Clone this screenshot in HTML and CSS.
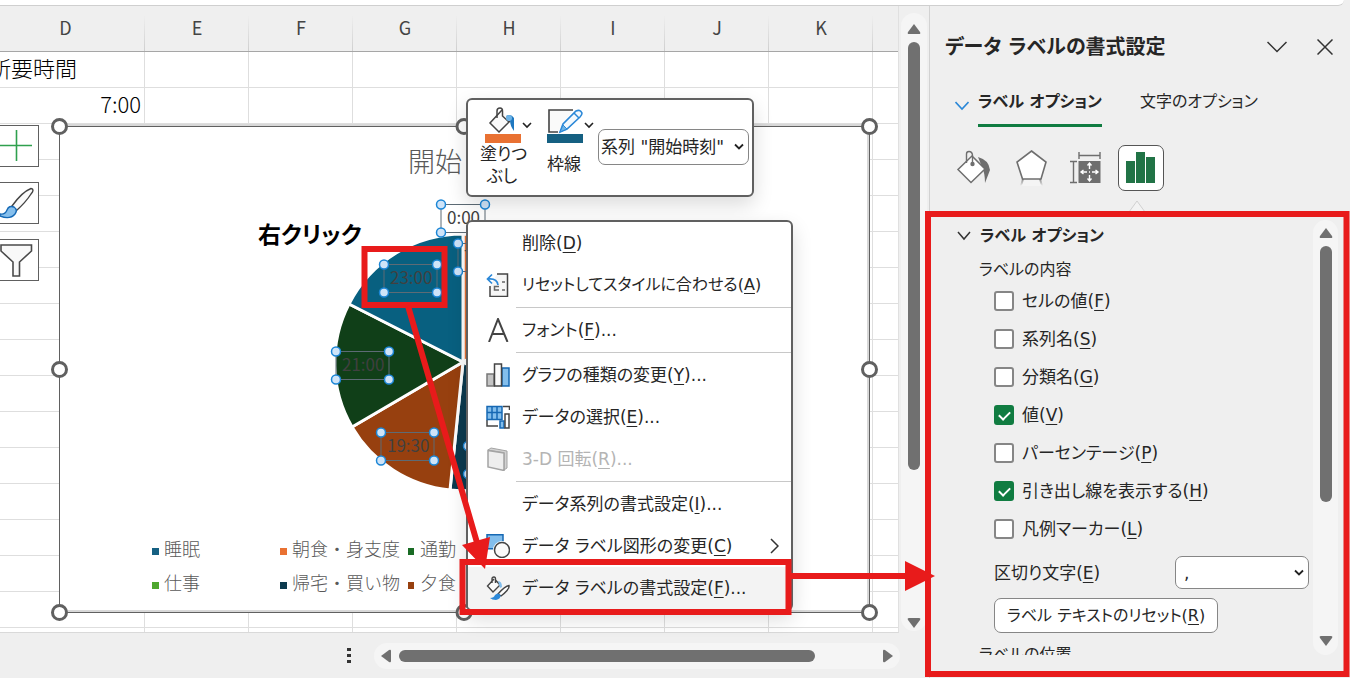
FILE: index.html
```html
<!DOCTYPE html>
<html lang="ja">
<head>
<meta charset="utf-8">
<meta name="viewport" content="width=device-width, initial-scale=1">
<title>データ ラベルの書式設定</title>
<link rel="stylesheet" href="styles.css">
</head>
<body>
<div class="app">
  <div class="formula-strip"></div>
  <div class="main">
    <section class="workbook">
      <div class="sheet-row">
        <div class="sheet">
          <table class="grid">
            <colgroup><col class="col-first"><col class="col"><col class="col"><col class="col"><col class="col"><col class="col"><col class="col"><col class="col"><col></colgroup>
            <thead>
              <tr><th>D</th><th>E</th><th>F</th><th>G</th><th>H</th><th>I</th><th>J</th><th>K</th><th></th></tr>
            </thead>
            <tbody>
              <tr><td class="cell-text">所要時間</td><td></td><td></td><td></td><td></td><td></td><td></td><td></td><td></td></tr>
              <tr><td class="cell-num">7:00</td><td></td><td></td><td></td><td></td><td></td><td></td><td></td><td></td></tr>
              <tr><td></td><td></td><td></td><td></td><td></td><td></td><td></td><td></td><td></td></tr>
              <tr><td></td><td></td><td></td><td></td><td></td><td></td><td></td><td></td><td></td></tr>
              <tr><td></td><td></td><td></td><td></td><td></td><td></td><td></td><td></td><td></td></tr>
              <tr><td></td><td></td><td></td><td></td><td></td><td></td><td></td><td></td><td></td></tr>
              <tr><td></td><td></td><td></td><td></td><td></td><td></td><td></td><td></td><td></td></tr>
              <tr><td></td><td></td><td></td><td></td><td></td><td></td><td></td><td></td><td></td></tr>
              <tr><td></td><td></td><td></td><td></td><td></td><td></td><td></td><td></td><td></td></tr>
              <tr><td></td><td></td><td></td><td></td><td></td><td></td><td></td><td></td><td></td></tr>
              <tr><td></td><td></td><td></td><td></td><td></td><td></td><td></td><td></td><td></td></tr>
              <tr><td></td><td></td><td></td><td></td><td></td><td></td><td></td><td></td><td></td></tr>
              <tr><td></td><td></td><td></td><td></td><td></td><td></td><td></td><td></td><td></td></tr>
              <tr><td></td><td></td><td></td><td></td><td></td><td></td><td></td><td></td><td></td></tr>
              <tr><td></td><td></td><td></td><td></td><td></td><td></td><td></td><td></td><td></td></tr>
              <tr><td></td><td></td><td></td><td></td><td></td><td></td><td></td><td></td><td></td></tr>
              <tr><td></td><td></td><td></td><td></td><td></td><td></td><td></td><td></td><td></td></tr>
            </tbody>
          </table>
        </div>
        <div class="vscroll">
          <svg class="arrow" viewBox="0 0 14 12"><path d="M7 1 L13 9 Q14 11 12 11 H2 Q0 11 1 9Z"/></svg>
          <div class="vthumb"></div>
          <svg class="arrow vdown" viewBox="0 0 14 12"><path d="M7 11 L13 3 Q14 1 12 1 H2 Q0 1 1 3Z"/></svg>
        </div>
      </div>
      <div class="sheet-footer">
        <svg class="dots" viewBox="0 0 4 16"><path d="M0 0h4v3H0zM0 6h4v3H0zM0 12h4v3H0z"/></svg>
        <div class="hscroll">
          <svg class="arrow-h" viewBox="0 0 12 14"><path d="M1 7 L9 1 Q11 0 11 2 V12 Q11 14 9 13Z"/></svg>
          <div class="hthumb"></div>
          <svg class="arrow-h hright" viewBox="0 0 12 14"><path d="M11 7 L3 1 Q1 0 1 2 V12 Q1 14 3 13Z"/></svg>
        </div>
      </div>
    </section>

    <aside class="pane">
      <header class="pane-head">
        <h1>データ ラベルの書式設定</h1>
        <button class="plain" aria-label="作業ウィンドウのオプション"><svg width="20" height="12" viewBox="0 0 20 12"><path class="stroke" d="M0.5 1 L10 10.500 L19.500 1"/></svg></button>
        <button class="plain" aria-label="閉じる"><svg width="16" height="16" viewBox="0 0 16 16"><path class="stroke" d="M0.500 0.500 L15.500 15.500 M15.500 0.500 L0.500 15.500"/></svg></button>
      </header>
      <nav class="tabs">
        <svg class="tab-chevron" width="14" height="10" viewBox="0 0 14 10"><path d="M0.500 1 L7 8 L13.500 1"/></svg>
        <button class="tab tab-on">ラベル オプション</button>
        <button class="tab">文字のオプション</button>
      </nav>
      <div class="icon-tabs">
        <button class="icon-tab" aria-label="塗りつぶしと線">
          <svg width="46" height="46" viewBox="0 0 46 46"><path d="M22 12 Q33 15 34 25 L29 38 Q29 28 26 22Z" fill="#6e6e6e"/><path d="M16 11 L29 24 L15 37.500 L2 24.500Z" fill="#fff" stroke="#6e6e6e" stroke-width="1.500"/><path d="M10.500 18 V9 Q10.500 6.500 13 6.500 Q16 6.500 16.500 10 V18" fill="none" stroke="#6e6e6e" stroke-width="1.400"/><circle cx="16.500" cy="19" r="2.200" fill="#6e6e6e"/></svg>
        </button>
        <button class="icon-tab" aria-label="効果">
          <svg width="46" height="46" viewBox="0 0 46 46"><defs><linearGradient id="fade" x1="0" y1="0" x2="0" y2="1"><stop offset="0" stop-color="#8b8b8b"/><stop offset="1" stop-color="#efefef"/></linearGradient></defs><path d="M12 34 H31 L33 41 L30 39 Q21 35 13 39 L10 41Z" fill="url(#fade)"/><path d="M14 34 H29 L31 41 H12Z" fill="#f4f4f4"/><path d="M21.500 6 L36 17 L31 34 H12.500 L7 17Z" fill="#fff" stroke="#6e6e6e" stroke-width="1.600"/></svg>
        </button>
        <button class="icon-tab" aria-label="サイズとプロパティ">
          <svg width="46" height="46" viewBox="0 0 46 46"><path d="M15 7 V14 M36 7 V14 M15 10.500 H36 M6 16.500 H13 M6 37.500 H13 M9.500 16.500 V37.500" fill="none" stroke="#6e6e6e" stroke-width="1.400"/><rect x="14.500" y="16" width="22" height="22" fill="#6e6e6e"/><path d="M25.500 18v6M25.500 30v6M17 27h6M28 27h6M23.500 20.500l2-2.500 2 2.500M23.500 33.500l2 2.500 2-2.500M19.500 25l-2.500 2 2.500 2M31.500 25l2.500 2-2.500 2M25 27h1" fill="none" stroke="#fff" stroke-width="1.400"/></svg>
        </button>
        <button class="icon-tab icon-tab-on" aria-label="ラベル オプション">
          <svg width="44" height="44" viewBox="0 0 44 44"><path d="M7 15h9v22H7zM17 6h9v31h-9zM27 11h9v26h-9z" fill="#217346"/></svg>
        </button>
      </div>
      <svg class="pointer" width="18" height="12" viewBox="0 0 18 12"><path d="M1 12 L9 1 L17 12" fill="#f3f3f3" stroke="#d0d0d0"/></svg>
      <div class="section">
        <div class="section-body">
          <h2><svg width="14" height="10" viewBox="0 0 14 10"><path class="stroke" d="M1 1 L7 8 L13 1"/></svg>ラベル オプション</h2>
          <p class="group">ラベルの内容</p>
          <div class="checks">
            <label><input type="checkbox"><span>セルの値(<u>F</u>)</span></label>
            <label><input type="checkbox"><span>系列名(<u>S</u>)</span></label>
            <label><input type="checkbox"><span>分類名(<u>G</u>)</span></label>
            <label><input type="checkbox" checked><span>値(<u>V</u>)</span></label>
            <label><input type="checkbox"><span>パーセンテージ(<u>P</u>)</span></label>
            <label><input type="checkbox" checked><span>引き出し線を表示する(<u>H</u>)</span></label>
            <label><input type="checkbox"><span>凡例マーカー(<u>L</u>)</span></label>
          </div>
          <div class="field">
            <label for="sep">区切り文字(<u>E</u>)</label>
            <span class="select select-sep"><select id="sep"><option>,</option></select><svg width="10" height="8" viewBox="0 0 10 8"><path d="M1 1.500 L5 5.500 L9 1.500"/></svg></span>
          </div>
          <button class="reset">ラベル テキストのリセット(<u>R</u>)</button>
          <p class="group">ラベルの位置</p>
        </div>
        <div class="pscroll">
          <svg class="arrow" viewBox="0 0 14 12"><path d="M7 1 L13 9 Q14 11 12 11 H2 Q0 11 1 9Z"/></svg>
          <div class="pthumb"></div>
          <svg class="arrow vdown" viewBox="0 0 14 12"><path d="M7 11 L13 3 Q14 1 12 1 H2 Q0 1 1 3Z"/></svg>
        </div>
      </div>
    </aside>
  </div>

  <div class="chart">
    <svg width="830" height="506" viewBox="49 116 830 506">
      <rect x="59" y="126" width="810" height="486" fill="#fff"/>
      <path d="M59 125H869M59 611H869M868 126V612" stroke="#d8d8d8" stroke-width="2" fill="none"/>
      <rect x="59.500" y="126.500" width="810" height="486" fill="none" stroke="#606060"/>
      <text class="chart-title" x="408" y="172">開始</text>
      <g stroke="#fff" stroke-width="3" stroke-linejoin="round">
        <path fill="#e97132" d="M463 362V234A128 128 0 0 1 574 298Z"/>
        <path fill="#0b3a4f" d="M463 362L574 426A128 128 0 0 1 450 490Z"/>
        <path fill="#97400f" d="M463 362L450 490A128 128 0 0 1 352 427Z"/>
        <path fill="#103f18" d="M463 362L352 427A128 128 0 0 1 349 304Z"/>
        <path fill="#086080" d="M463 362L349 304A128 128 0 0 1 463 234Z"/>
      </g>
      <g class="label-boxes">
        <path d="M441 204.500h44v28h-44zM384 264.500h53v28h-53zM336 351.500h53v28h-53zM381 432.500h53v28h-53zM458 243.500h44v28h-44z"/>
      </g>
      <g class="data-labels">
        <text x="447" y="224">0:00</text>
        <text x="464" y="263">7:00</text>
        <text x="390" y="284">23:00</text>
        <text x="342" y="371">21:00</text>
        <text x="387" y="452">19:30</text>
      </g>
      <g class="dots-sel">
        <circle cx="441" cy="204.500" r="4.500"/><circle cx="485" cy="204.500" r="4.500"/><circle cx="441" cy="232.500" r="4.500"/>
        <circle cx="458" cy="243.500" r="4.500"/><circle cx="458" cy="271.500" r="4.500"/>
        <circle cx="384" cy="264.500" r="4.500"/><circle cx="437" cy="264.500" r="4.500"/><circle cx="384" cy="292.500" r="4.500"/><circle cx="437" cy="292.500" r="4.500"/>
        <circle cx="336" cy="351.500" r="4.500"/><circle cx="389" cy="351.500" r="4.500"/><circle cx="336" cy="379.500" r="4.500"/><circle cx="389" cy="379.500" r="4.500"/>
        <circle cx="381" cy="432.500" r="4.500"/><circle cx="434" cy="432.500" r="4.500"/><circle cx="381" cy="460.500" r="4.500"/><circle cx="434" cy="460.500" r="4.500"/>
        <circle cx="468" cy="446" r="4.500"/><circle cx="468" cy="474" r="4.500"/>
      </g>
      <g class="legend">
        <path fill="#156082" d="M152 548h7v7h-7z"/><text x="164" y="556">睡眠</text>
        <path fill="#e97132" d="M280 548h7v7h-7z"/><text x="292" y="556">朝食・身支度</text>
        <path fill="#196b24" d="M408 548h6v7h-6z"/><text x="420" y="556">通勤</text>
        <path fill="#4ea72e" d="M152 582h7v7h-7z"/><text x="164" y="590">仕事</text>
        <path fill="#0c3a4e" d="M280 582h7v7h-7z"/><text x="292" y="590">帰宅・買い物</text>
        <path fill="#97400f" d="M408 582h6v7h-6z"/><text x="420" y="590">夕食</text>
      </g>
      <g fill="#fff" stroke="#606060" stroke-width="3">
        <circle cx="59.500" cy="126.500" r="7"/><circle cx="464" cy="126.500" r="7"/><circle cx="869.500" cy="126.500" r="7"/>
        <circle cx="59.500" cy="369.500" r="7"/><circle cx="869.500" cy="369.500" r="7"/>
        <circle cx="59.500" cy="612.500" r="7"/><circle cx="464" cy="612.500" r="7"/><circle cx="869.500" cy="612.500" r="7"/>
      </g>
    </svg>
  </div>

  <div class="chart-tools">
    <button aria-label="グラフ要素"><svg width="38" height="40" viewBox="0 0 38 40"><path d="M0 19.500H32M16.500 4V35" stroke="#2fa04e" stroke-width="1.600" fill="none"/></svg></button>
    <button aria-label="グラフ スタイル"><svg width="38" height="40" viewBox="0 0 38 40"><path d="M12 23 Q22 9 31 5.500 Q35 6 31 11 Q26 19 16 28Z" fill="#fafafa" stroke="#444" stroke-width="1.400"/><path d="M0 31 Q5 32 7 27 Q9 22 14 24 Q18 27 15 31 Q10 37 0 33Z" fill="#86bfec" stroke="#1468b5" stroke-width="1.400"/></svg></button>
    <button aria-label="グラフ フィルター"><svg width="38" height="40" viewBox="0 0 38 40"><path d="M1 5H31.500V11L19.500 22V36H13V22L1 11Z" fill="#f8f8f8" stroke="#4a4a4a" stroke-width="1.600"/></svg></button>
  </div>

  <div class="mini-toolbar">
    <button class="mini-btn">
      <svg width="50" height="38" viewBox="0 0 50 38"><path d="M18 5 L6 18 L15 27 L27 15" fill="#fafafa" stroke="#444" stroke-width="1.500"/><path d="M13 13V6 Q13 3 16 3 Q18.500 3 18.500 6V11 L25 17" fill="none" stroke="#444" stroke-width="1.500"/><path d="M22 11 Q27 8 30 13 V26 Q26 21 26 15Z" fill="#1f78c0"/><circle cx="25" cy="13" r="3" fill="#6db3e6"/><path fill="#e97132" d="M1 29h36v9H1z"/><path d="M39 18 L43 22 L47 18" fill="none" stroke="#222" stroke-width="1.600"/></svg>
      <span>塗りつ<br>ぶし</span>
    </button>
    <button class="mini-btn">
      <svg width="50" height="38" viewBox="0 0 50 38"><path d="M27 5H3V27H12" fill="#fafafa" stroke="#444" stroke-width="1.600"/><path d="M14 27 L17 19 L30 6 Q34 4 36 8 Q36 10 34 12 L21 24Z" fill="#f2f8fd" stroke="#2b88d8" stroke-width="1.600"/><path d="M14 27 L17 20 L21 24Z" fill="#6db3e6" stroke="#2b88d8"/><path d="M28 8 L33 13" stroke="#2b88d8" stroke-width="1.500"/><path fill="#156082" d="M1 29h36v9H1z"/><path d="M39 18 L43 22 L47 18" fill="none" stroke="#222" stroke-width="1.600"/></svg>
      <span class="one-line">枠線</span>
    </button>
    <span class="select select-series"><select aria-label="グラフ要素"><option>系列 "開始時刻"</option></select><svg width="10" height="8" viewBox="0 0 10 8"><path d="M1 1.500 L5 5.500 L9 1.500"/></svg></span>
  </div>

  <div class="menu" role="menu">
    <button role="menuitem"><span class="ico"></span>削除(<u>D</u>)</button>
    <button role="menuitem" class="kana"><svg class="ico" viewBox="0 0 24 24"><path d="M11 1H21.500V23.500H4V13" fill="#f6f6f6" stroke="#444" stroke-width="1.500"/><path d="M13 13.500H8.500V17H13M16 9h3M16 17h3" fill="none" stroke="#666" stroke-width="1.500"/><path d="M6 1.500 L1.500 6 L6 10.500 M2 6 Q11 5 12 12" fill="none" stroke="#2b88d8" stroke-width="1.700"/></svg>リセットしてスタイルに合わせる(<u>A</u>)</button>
    <hr>
    <button role="menuitem"><svg class="ico" viewBox="0 0 24 24"><path d="M3 24 L12 1 L21.500 24 M6 16H18.500" fill="none" stroke="#444" stroke-width="2"/></svg>フォント(<u>F</u>)...</button>
    <hr>
    <button role="menuitem"><svg class="ico" viewBox="0 0 24 24"><path d="M1 11h7v12H1z" fill="#c4c4c4" stroke="#777" stroke-width="1.500"/><path d="M16 5h7v18h-7z" fill="#83beec" stroke="#1668b3" stroke-width="1.500"/><path d="M8.500 1h7v22h-7z" fill="#fafafa" stroke="#444" stroke-width="1.500"/></svg>グラフの種類の変更(<u>Y</u>)...</button>
    <button role="menuitem"><svg class="ico" viewBox="0 0 24 24"><path d="M1 15V21H12M17 1.500H23.500V5" fill="none" stroke="#444" stroke-width="1.500"/><path d="M1 1.500h15v13H1z" fill="#83beec"/><path d="M1 1.500h15v13H1zM1 7.500h15M6 1v14M11 1v14" fill="none" stroke="#1668b3" stroke-width="1.500"/><path d="M14 16h4v7h-4z" fill="#83beec" stroke="#1668b3" stroke-width="1.500"/><path d="M19 9h4v14h-4z" fill="#fff" stroke="#444" stroke-width="1.500"/></svg>データの選択(<u>E</u>)...</button>
    <button role="menuitem" disabled><svg class="ico" viewBox="0 0 24 24"><path d="M2 3 L5 1 L21 4 V21 L18 23 V6Z" fill="#d2d2d2" stroke="#a4a4a4"/><path d="M2 3.500 L18 6 V23.500 L2 20Z" fill="#eee" stroke="#a4a4a4" stroke-width="1.500"/></svg>3-D 回転(<u>R</u>)...</button>
    <hr>
    <button role="menuitem"><span class="ico"></span>データ系列の書式設定(<u>I</u>)...</button>
    <button role="menuitem"><svg class="ico" viewBox="0 0 24 24"><path d="M1 .8h16v14H1z" fill="#83beec" stroke="#1668b3" stroke-width="1.500"/><circle cx="16" cy="16" r="9" fill="#fff"/><circle cx="16" cy="16" r="7.500" fill="#fafafa" stroke="#444" stroke-width="1.500"/></svg>データ ラベル図形の変更(<u>C</u>)<svg class="sub" width="9" height="16" viewBox="0 0 9 16"><path class="stroke" d="M1 1 L8 8 L1 15"/></svg></button>
    <button role="menuitem" class="hot"><svg class="ico" viewBox="0 0 24 24"><path d="M8 3 L1.500 10 L7 16 L14 9 L9.500 4 M6 7V3 Q6 1 8 1 Q9.500 1 9.500 3V7" fill="#fafafa" stroke="#444" stroke-width="1.400"/><path d="M12 5 Q16 5 16 11 L14 12Z" fill="#83beec"/><path d="M12 18 Q19 10 23 9.500 Q24 13 15 20Z" fill="#fff" stroke="#444" stroke-width="1.400"/><path d="M4 22 Q8 22 9 19 Q12 16 14.500 19 Q15 23 10 24 Q6 24 4 22Z" fill="#2b88d8"/></svg>データ ラベルの書式設定(<u>F</u>)...</button>
  </div>

  <p class="callout">右クリック</p>
  <svg class="marks" width="1350" height="678" viewBox="0 0 1350 678">
    <g fill="none" stroke="#e81b1b" stroke-width="6">
      <path d="M364.500 249h80v56h-80zM462.500 562h326v50h-326zM928 214h418.500v460H928z"/>
      <path d="M408 306L478 546M791 576H908"/>
    </g>
    <path fill="#e81b1b" d="M462 545L490 537L485 569ZM905 561L935 576L905 591Z"/>
  </svg>
</div>
</body>
</html>
```

FILE: styles.css
```css
* { box-sizing: border-box; }

body {
  margin: 0;
  font-family: "DejaVu Sans", "Noto Sans CJK JP", sans-serif;
  font-size: 17px;
  line-height: 24px;
  font-feature-settings: "palt";
  color: #262626;
  background: #efefef;
}

button, select, input {
  font: inherit;
  font-feature-settings: inherit;
  color: inherit;
}

button {
  border: 0;
  padding: 0;
  background: none;
}

p, h1, h2 { margin: 0; }

u { text-underline-offset: 3px; text-decoration-thickness: 1px; }

.stroke { fill: none; stroke: #333; stroke-width: 1.5; }

.app {
  position: relative;
  display: flex;
  flex-direction: column;
  height: 100vh;
  overflow: hidden;
}

.formula-strip {
  height: 6px;
  margin-right: 6px;
  background: #fff;
  border-bottom: 1px solid #cfcfcf;
  border-bottom-right-radius: 6px;
}

.main { display: flex; flex: 1; min-height: 0; }

/* Worksheet */
.workbook { display: flex; flex-direction: column; flex: 1; min-width: 0; }
.sheet-row { display: flex; flex: 1; min-height: 0; }
.sheet {
  flex: 1;
  min-width: 0;
  overflow: hidden;
  background: #fff;
  border-right: 1px solid #e0e0e0;
  border-bottom: 1px solid #d9d9d9;
}
.grid {
  width: 100%;
  table-layout: fixed;
  border-collapse: separate;
  border-spacing: 0;
  font-family: "Noto Sans CJK JP", sans-serif;
}
.col-first { width: 145px; }
.col { width: 104px; }
.grid th {
  height: 46px;
  padding: 0 0 3px;
  font-size: 18px;
  font-weight: 400;
  color: #444;
  background: linear-gradient(#efefef 20%, #cfcfcf) right / 1px 100% no-repeat #efefef;
  border-bottom: 1px solid #a6a6a6;
}
.grid th:last-child { background: #efefef; }
.grid th:first-child { padding-right: 14px; }
.grid td {
  height: 36px;
  padding: 0 3px 5px;
  font-size: 22px;
  font-weight: 300;
  line-height: 30px;
  color: #000;
  border-right: 1px solid #dedede;
  border-bottom: 1px solid #dedede;
  white-space: nowrap;
}
.grid td:last-child { border-right: 0; }
.grid .cell-text { text-indent: -14px; font-feature-settings: normal; }
.grid .cell-num { text-align: right; }

.arrow { width: 14px; height: 12px; fill: #707070; }
.arrow-h { width: 12px; height: 14px; fill: #707070; }

.vscroll, .pscroll {
  display: flex;
  flex-direction: column;
  align-items: center;
  background: #f5f5f5;
  border-radius: 13px;
}
.vscroll { width: 26px; margin: 7px 2px 2px; padding: 10px 0 2px; }
.vthumb, .pthumb { width: 12px; margin-top: 7px; background: #707070; border-radius: 6px; }
.vthumb { height: 428px; }
.vdown { margin-top: auto; }

.sheet-footer {
  display: flex;
  align-items: center;
  justify-content: flex-end;
  gap: 23px;
  height: 45px;
  padding-right: 29px;
}
.dots { width: 4px; height: 16px; fill: #333; }
.hscroll {
  display: flex;
  align-items: center;
  width: 526px;
  height: 26px;
  padding: 0 6px;
  border-radius: 13px;
  background: #f5f5f5;
}
.hthumb { width: 416px; height: 12px; margin-left: 7px; border-radius: 6px; background: #707070; }
.hright { margin-left: auto; }

/* Format pane */
.pane {
  display: flex;
  flex-direction: column;
  width: 421px;
  min-height: 0;
  border-left: 1px solid #d2d2d2;
}
.pane-head { display: flex; align-items: center; padding: 25px 17px 0 15px; height: 57px; }
.pane-head h1 { flex: 1; font-size: 20px; line-height: 32px; }
.plain { display: flex; margin-left: 30px; }

.tabs { display: flex; height: 64px; padding: 24px 0 0 25px; font-size: 16px; }
.tab-chevron { margin: 14px 9px 0 0; fill: none; stroke: #2b88d8; stroke-width: 1.600; }
.tab { height: 40px; padding-bottom: 8px; border-bottom: 3px solid transparent; }
.tab-on { font-weight: 700; border-color: #107c41; }
.tab + .tab { margin-left: 38px; }

.icon-tabs { display: flex; gap: 8px; padding: 18px 0 0 26px; }
.icon-tab { display: flex; width: 46px; height: 46px; }
.icon-tab-on { background: #fff; border: 1px solid #555; border-radius: 7px; }
.pointer { display: block; margin: 9px 0 0 198px; flex: none; }

.section { display: flex; flex: 1; min-height: 0; margin: 8px 12px 23px 0; }
.section-body { flex: 1; min-width: 0; overflow: hidden; padding: 4px 4px 0 27px; }
.section h2 { display: flex; align-items: center; gap: 9px; font-size: 16px; line-height: 24px; }
.group { padding: 10px 0 0 22px; font-size: 16px; line-height: 24px; }
.checks { padding: 0 0 0 37px; }
.checks label { display: flex; align-items: center; gap: 8px; height: 38px; }
.checks input {
  appearance: none;
  flex: none;
  display: flex;
  justify-content: center;
  width: 20px;
  height: 20px;
  margin: 0;
  border: 2px solid #868686;
  border-radius: 3px;
  background: #fff;
}
.checks input:checked { background: #107c41; border-color: #107c41; }
.checks input:checked::after {
  content: "";
  width: 5px;
  height: 9px;
  margin-top: 2px;
  border: solid #fff;
  border-width: 0 2px 2px 0;
  transform: rotate(45deg);
}
.field { display: flex; align-items: center; justify-content: space-between; padding: 8px 0 9px 37px; }

.select { display: grid; align-items: center; }
.select select, .select svg { grid-area: 1 / 1; }
.select svg { justify-self: end; margin-right: 5px; fill: none; stroke: #222; stroke-width: 1.800; pointer-events: none; }
.select select {
  appearance: none;
  width: 100%;
  border: 1px solid #868686;
  border-radius: 7px;
  background: #fff;
}
.select-sep { width: 134px; }
.select-sep select { height: 33px; padding: 0 8px; }
.reset { height: 35px; margin-left: 37px; padding: 0 12px; font-size: 16px; background: #fff; border: 1px solid #868686; border-radius: 7px; }

.pscroll { width: 25px; padding: 7px 0 8px; }
.pthumb { height: 256px; }

/* Chart object and its floating controls */
.chart { position: absolute; left: 49px; top: 116px; display: flex; }
.chart text { font-family: "Noto Sans CJK JP", sans-serif; font-feature-settings: normal; font-weight: 300; }
.chart .chart-title { font-size: 27px; fill: #595959; }
.chart .legend text { font-size: 18px; fill: #595959; }
.chart .data-labels text { font-size: 17px; font-weight: 400; fill: #404040; }
.label-boxes { fill: none; stroke: #5d6b75; }
.dots-sel { fill: #cfe4f8; stroke: #1b86d6; stroke-width: 1.500; }

.chart-tools { position: absolute; left: 0; top: 125px; display: grid; gap: 15px; }
.chart-tools button { display: flex; width: 39px; height: 42px; background: #fff; border: 1px solid #606060; border-left: 0; }

.mini-toolbar, .menu {
  position: absolute;
  left: 466px;
  background: #fff;
  border: 2px solid #606060;
  border-radius: 6px;
  box-shadow: 0 8px 20px rgba(0, 0, 0, .14);
}
.mini-toolbar { top: 98px; display: flex; width: 288px; height: 99px; padding: 5px 3px 0 12px; }
.mini-btn { display: flex; flex-direction: column; width: 62px; }
.mini-btn svg { flex: none; margin-left: 4px; }
.mini-btn span { width: 44px; line-height: 22px; text-align: center; white-space: nowrap; }
.mini-btn .one-line { margin-top: 10px; }
.select-series { width: 151px; height: 36px; margin: 24px 0 0 -6px; }
.select-series select { height: 36px; padding: 0 2px; }

.menu { top: 220px; width: 327px; overflow: hidden; }
.menu button { display: flex; align-items: center; width: 100%; height: 42px; padding-left: 18px; white-space: nowrap; }
.menu .kana { font-size: 16px; }
.menu .ico { flex: none; width: 24px; height: 24px; margin-right: 12px; }
.menu .sub { margin-left: auto; margin-right: 12px; }
.menu button:disabled { color: #b4b4b4; }
.menu .hot { background: #f3f3f3; }
.menu hr { height: 1px; margin: 1px 0 1px 48px; border: 0; background: #c8c8c8; }

.callout { position: absolute; left: 258px; top: 217px; font-size: 23px; font-weight: 700; line-height: 36px; color: #000; }
.marks { position: absolute; left: 0; top: 0; pointer-events: none; }
```
